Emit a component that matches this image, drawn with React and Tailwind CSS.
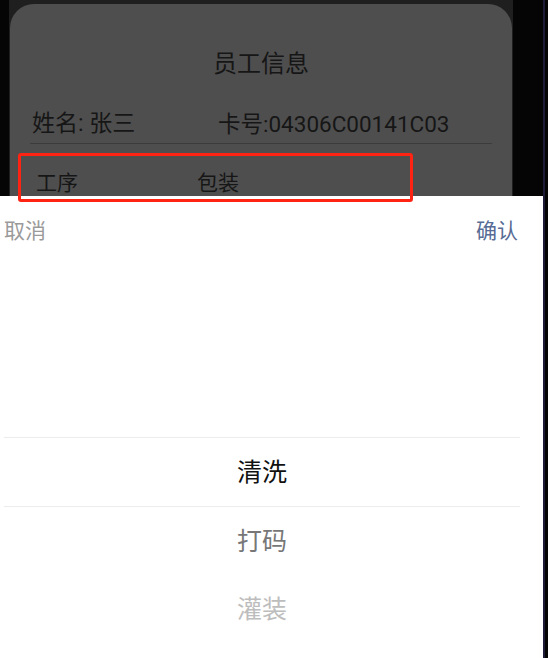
export default function App() {
  const font = "font-['Roboto','Noto_Sans_CJK_SC',sans-serif]";
  return (
    <div className={`relative w-[548px] h-[658px] bg-[#050505] flex overflow-hidden ${font}`}>
      <div className="w-[9px] shrink-0" />
      <div className="w-[504px] shrink-0 bg-[#1f1f1f] pt-[4px] pl-[1px]">
        <div className="w-[502px] h-full rounded-t-[24px] bg-[#4e4e4e] pt-[42px] text-[#161616]">
          <div className="text-center text-[24px] leading-[36px]">员工信息</div>
          <div className="mx-[20px] mt-[27px]">
            <div className="flex items-center pl-[2px] leading-[30px]">
              <div className="w-[186px] text-[23px]">姓名: 张三</div>
              <div className="text-[22.5px]">卡号:04306C00141C03</div>
            </div>
            <div className="mt-[4px] h-px bg-[#3c3c3c]" />
            <div className="flex pl-[6px] mt-[24px] text-[21px] leading-[30px]">
              <div className="w-[161px]">工序</div>
              <div>包装</div>
            </div>
          </div>
        </div>
      </div>
      <div className="w-[30px] shrink-0" />
      <div className="w-[2px] shrink-0 bg-[#1c1c38]" />

      <div className="absolute left-0 top-[196px] bottom-0 w-[543px] bg-white">
        <div className="flex justify-between pl-[4px] pr-[25px] pt-[20px] text-[21px] leading-[30px]">
          <span className="text-[#9a9a9a]">取消</span>
          <span className="text-[#576b95]">确认</span>
        </div>
        <div className="h-[191px]" />
        <div className="mx-[4px] w-[516px] text-[25px]">
          <div className="h-px bg-[#ececec]" />
          <div className="h-[68px] pt-[2px] flex items-center justify-center text-[#111111]">清洗</div>
          <div className="h-px bg-[#ececec]" />
          <div className="h-[68px] pt-[2px] flex items-center justify-center text-[#777777]">打码</div>
          <div className="h-[68px] pt-[2px] flex items-center justify-center text-[#bdbdbd]">灌装</div>
        </div>
      </div>

      <div className="absolute left-[18px] top-[153px] w-[395px] h-[49px] border-[3px] border-[#ff2314] rounded-[3px]" />
    </div>
  );
}
